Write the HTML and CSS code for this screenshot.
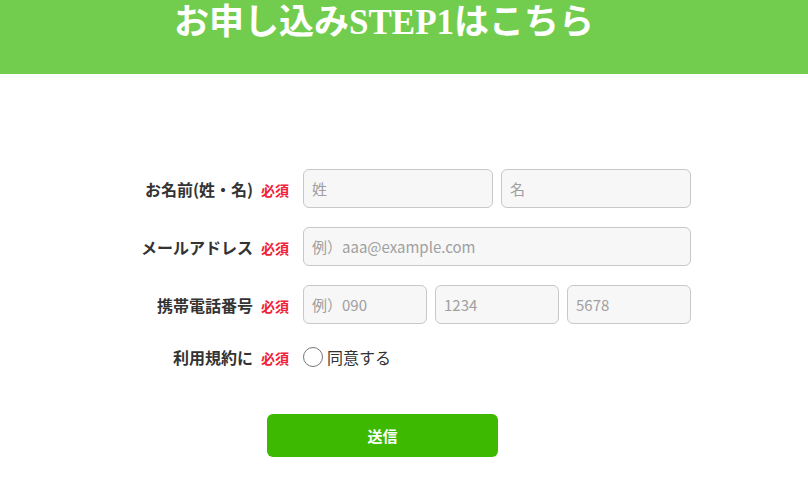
FILE: index.html
```html
<!DOCTYPE html>
<html lang="ja">
<head>
<meta charset="utf-8">
<link rel="stylesheet" href="styles.css">
</head>
<body>
<header class="hero">
  <h1 class="hero-title">お申し込みSTEP1はこちら</h1>
</header>
<form class="form">
  <div class="row">
    <div class="label">お名前(姓・名)<span class="req">必須</span></div>
    <div class="fields">
      <input class="input" placeholder="姓">
      <input class="input" placeholder="名">
    </div>
  </div>
  <div class="row">
    <div class="label">メールアドレス<span class="req">必須</span></div>
    <div class="fields">
      <input class="input" placeholder="例）aaa@example.com">
    </div>
  </div>
  <div class="row">
    <div class="label">携帯電話番号<span class="req">必須</span></div>
    <div class="fields">
      <input class="input" placeholder="例）090">
      <input class="input" placeholder="1234">
      <input class="input" placeholder="5678">
    </div>
  </div>
  <div class="row row-agree">
    <div class="label">利用規約に<span class="req">必須</span></div>
    <label class="agree"><span class="radio"></span>同意する</label>
  </div>
  <div class="submit-wrap">
    <button type="button" class="submit">送信</button>
  </div>
</form>
</body>
</html>
```
FILE: styles.css
```css
* { box-sizing: border-box; }
body {
  margin: 0;
  background: #fff;
  font-family: "Noto Sans CJK JP", "Noto Sans", sans-serif;
  color: #333;
}
.hero {
  background: #72cd4e;
  height: 74px;
  padding-left: 174px;
}
.hero-title {
  margin: 0;
  color: #fff;
  font-family: "Liberation Serif", "Noto Sans CJK JP", serif;
  font-weight: bold;
  font-size: 35px;
  line-height: 46px;
}
.form {
  padding-top: 95px;
  display: flex;
  flex-direction: column;
  gap: 19px;
}
.row {
  display: flex;
  align-items: center;
  gap: 14px;
}
.label {
  width: 289px;
  text-align: right;
  font-weight: bold;
  font-size: 16px;
  color: #333;
  white-space: nowrap;
}
.req {
  color: #f0223a;
  font-size: 14px;
  margin-left: 8px;
}
.fields {
  width: 388px;
  display: flex;
  gap: 8px;
}
.input {
  flex: 1;
  min-width: 0;
  height: 39px;
  border: 1px solid #c8c8c8;
  border-radius: 6px;
  background: #f7f7f7;
  padding: 0 8px;
  font-family: "Noto Sans CJK JP", "Noto Sans", sans-serif;
  font-size: 15px;
  color: #333;
}
.input::placeholder { color: #a0a0a0; }
.row-agree { margin-top: 2px; }
.agree {
  display: flex;
  align-items: center;
  gap: 4px;
  font-size: 16px;
  color: #333;
}
.radio {
  width: 20px;
  height: 20px;
  border: 1px solid #777;
  border-radius: 50%;
  background: #fff;
}
.submit-wrap {
  padding-left: 267px;
  margin-top: 26px;
}
.submit {
  width: 231px;
  height: 43px;
  border: 0;
  border-radius: 6px;
  background: #3cb900;
  color: #fff;
  font-family: "Noto Sans CJK JP", sans-serif;
  font-weight: bold;
  font-size: 15px;
}
```
